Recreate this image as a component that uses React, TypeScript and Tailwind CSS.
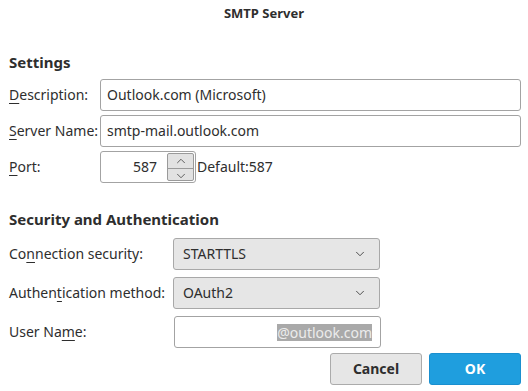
import { ChevronDown, ChevronUp } from "lucide-react";

const font = { fontFamily: '"Noto Sans", "Open Sans", sans-serif' };

function Mn({ children }: { children: string }) {
  return <span className="underline decoration-1 underline-offset-[3px]">{children}</span>;
}

function TextBox({ value, className = "" }: { value: string; className?: string }) {
  return (
    <div
      className={`flex h-[32px] items-center rounded-[3px] border border-[#a3a3a3] bg-white px-[6px] text-[#2e2e2e] ${className}`}
    >
      {value}
    </div>
  );
}

function Select({ value }: { value: string }) {
  return (
    <div className="flex h-[32px] w-[207px] items-center justify-between rounded-[3px] border border-[#a8a8a8] bg-[#e6e6e6] pl-[9px] pr-[12px] text-[#2e2e2e]">
      <span>{value}</span>
      <ChevronDown size={14} strokeWidth={1.6} className="text-[#444]" />
    </div>
  );
}

export default function App() {
  return (
    <div className="h-[391px] w-[528px] overflow-hidden whitespace-nowrap bg-white text-[#2e2e2e]" style={font}>
      <div className="pt-[4px] text-center text-[13px] font-bold leading-[18px]">SMTP Server</div>

      <div className="pl-[9px] pr-[7px] text-[14px] leading-[20px]">
        <h2 className="mt-[30px] text-[15px] font-bold leading-[20px]">Settings</h2>

        <div className="mt-[7px] grid grid-cols-[91px_1fr] items-center gap-y-[4px]">
          <label>
            <Mn>D</Mn>escription:
          </label>
          <TextBox value="Outlook.com (Microsoft)" />
          <label>
            <Mn>S</Mn>erver Name:
          </label>
          <TextBox value="smtp-mail.outlook.com" />
          <label>
            <Mn>P</Mn>ort:
          </label>
          <div className="flex items-center">
            <div className="flex h-[32px] w-[96px] items-center rounded-[3px] border border-[#a3a3a3] bg-white pl-[6px] pr-[1px]">
              <span className="flex-1 pr-[10px] text-right">587</span>
              <div className="flex h-[28px] w-[27px] flex-col overflow-hidden rounded-[2px] border border-[#9a9a9a] bg-[#e2e2e2]">
                <div className="flex flex-1 items-center justify-center border-b border-[#9a9a9a]">
                  <ChevronUp size={14} strokeWidth={1.4} className="text-[#444]" />
                </div>
                <div className="flex flex-1 items-center justify-center">
                  <ChevronDown size={14} strokeWidth={1.4} className="text-[#444]" />
                </div>
              </div>
            </div>
            <span className="ml-[1px]">Default:587</span>
          </div>
        </div>

        <h2 className="mt-[26px] text-[15px] font-bold leading-[20px]">Security and Authentication</h2>

        <div className="mt-[9px] grid grid-cols-[164px_1fr] items-center gap-y-[7px]">
          <label>
            Co<Mn>n</Mn>nection security:
          </label>
          <Select value="STARTTLS" />
          <label>
            Authen<Mn>t</Mn>ication method:
          </label>
          <Select value="OAuth2" />
          <label>
            User Na<Mn>m</Mn>e:
          </label>
          <div className="ml-[1px] flex h-[32px] w-[207px] items-center justify-end rounded-[3px] border border-[#a3a3a3] bg-white pr-[8px]">
            <span className="bg-[#a9a9a9] leading-[17px] text-[#ececec]">@outlook.com</span>
          </div>
        </div>

        <div className="mt-[5px] flex justify-end gap-[7px]">
          <button className="h-[32px] w-[92px] rounded-[3px] border border-[#ababab] bg-[#e6e6e6] font-bold text-[#2e2e2e]">
            Cancel
          </button>
          <button className="h-[32px] w-[92px] rounded-[3px] border border-[#1a8fcf] bg-[#1f9ede] font-bold text-white">
            OK
          </button>
        </div>
      </div>
    </div>
  );
}
